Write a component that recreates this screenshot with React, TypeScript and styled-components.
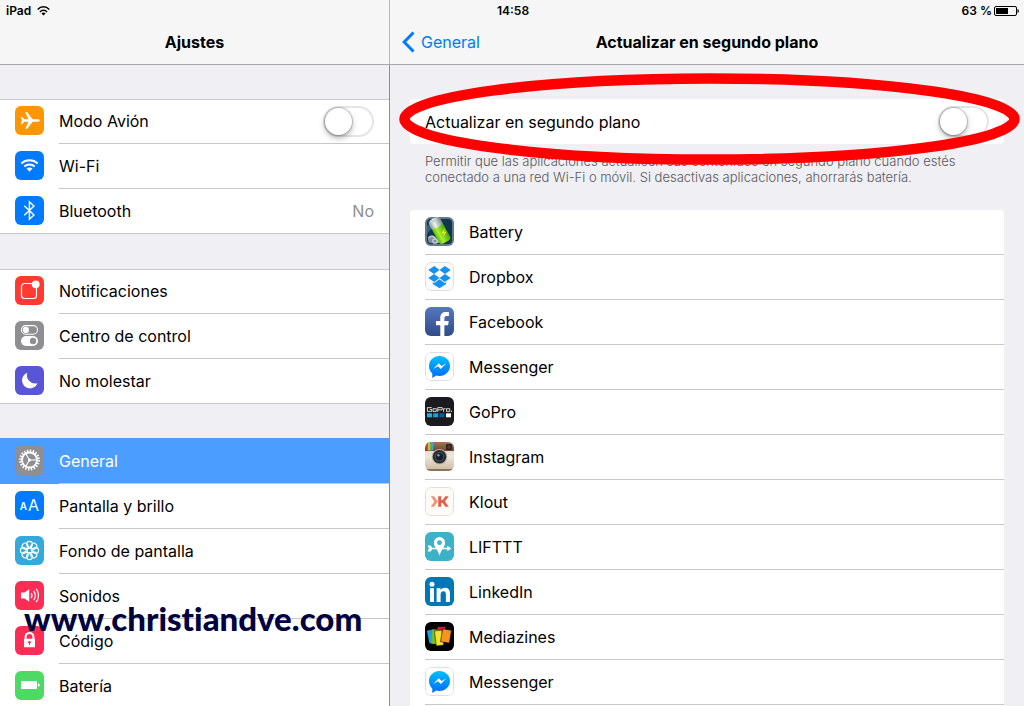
import React from "react";
import styled, { createGlobalStyle, css } from "styled-components";

const GlobalStyle = createGlobalStyle`
  *, *::before, *::after { box-sizing: border-box; }
  html, body, #root { height: 100%; }
  body {
    margin: 0;
    overflow: hidden;
    background: #efeff4;
    color: #000;
    font-family: Inter, "Liberation Sans", sans-serif;
    font-size: 16px;
  }
`;

const Screen = styled.div`
  position: relative;
  display: flex;
  height: 100vh;
  overflow: hidden;
`;

const StatusBar = styled.div`
  position: absolute;
  inset: 0 0 auto 0;
  z-index: 2;
  display: grid;
  grid-template-columns: 1fr auto 1fr;
  align-items: center;
  height: 20px;
  padding: 2px 4px 0 6px;
  font-size: 12px;
  font-weight: 600;
  line-height: 16px;
`;

const StatusItem = styled.div<{ $end?: boolean }>`
  display: flex;
  align-items: center;
  gap: ${(p) => (p.$end ? 2 : 6)}px;
  justify-content: ${(p) => (p.$end ? "flex-end" : "flex-start")};
`;

const Pane = styled.div`
  display: flex;
  flex-direction: column;
  min-width: 0;
  flex: 1;
`;

const Sidebar = styled(Pane)`
  flex: 0 0 390px;
`;

const Header = styled.header<{ $divided?: boolean }>`
  display: grid;
  grid-template-columns: 1fr auto 1fr;
  align-items: center;
  flex: none;
  height: 65px;
  padding: 20px 12px 0;
  background: #f6f6f6;
  border-bottom: 1px solid #a7a7ab;
  ${(p) => p.$divided && css`border-right: 1px solid #b8b8bb;`}
`;

const Title = styled.h1`
  grid-column: 2;
  margin: 0;
  font-size: 16px;
  font-weight: 700;
  line-height: 20px;
`;

const BackButton = styled.button`
  display: flex;
  align-items: center;
  gap: 6px;
  justify-self: start;
  padding: 0;
  border: 0;
  background: none;
  color: #007aff;
  font: inherit;
  line-height: 20px;
  cursor: pointer;
`;

const SideBody = styled.nav`
  display: flex;
  flex-direction: column;
  flex: 1;
  gap: 35px;
  min-height: 0;
  padding-top: 34px;
  overflow: hidden;
  border-right: 1px solid #8e8e93;
`;

const Group = styled.ul`
  flex: none;
  margin: 0;
  padding: 0;
  list-style: none;
  background: #fff;
  box-shadow: inset 0 1px #c8c7cc;
`;

const rowLayout = css`
  display: flex;
  align-items: stretch;
  height: 45px;
  padding-left: 15px;
  gap: 15px;
  color: inherit;
  text-decoration: none;
`;

const Item = styled.li<{ $selected?: boolean; $last?: boolean }>`
  ${(p) => p.$selected && css`background: #4b9eff; color: #fff; box-shadow: 0 -1px #4b9eff;`}
  ${(p) => p.$last && css`box-shadow: inset 0 -1px #c8c7cc;`}
`;

const RowLink = styled.a`${rowLayout}`;
const RowLabel = styled.label`${rowLayout}`;

const AppRow = styled.li`
  ${rowLayout}
  margin-left: 15px;
  padding-left: 0;
  border-bottom: 1px solid #c8c7cc;
`;

const RowBody = styled.span<{ $line?: boolean }>`
  display: flex;
  flex: 1;
  align-items: center;
  justify-content: space-between;
  padding-right: 15px;
  line-height: 20px;
  ${(p) => p.$line !== undefined && css`border-bottom: 1px solid ${p.$line ? "#c8c7cc" : "transparent"};`}
`;

const Value = styled.span`
  color: #8e8e93;
`;

const IconBox = styled.svg`
  display: block;
  flex: none;
  width: 29px;
  height: 29px;
  margin-top: 7px;
  border-radius: 6px;
`;

const Toggle = styled.input`
  appearance: none;
  flex: none;
  width: 51px;
  height: 31px;
  margin: 0;
  border: 2px solid #e5e5e5;
  border-radius: 16px;
  background: #fff;
  &::before {
    content: "";
    display: block;
    width: 27px;
    height: 27px;
    border-radius: 50%;
    background: #fff;
    box-shadow: 0 0 1px 1px rgba(0, 0, 0, 0.2), 0 3px 6px rgba(0, 0, 0, 0.3);
  }
  &:checked { background: #4cd964; border-color: #4cd964; }
  &:checked::before { margin-left: 20px; }
`;

const Detail = styled.main`
  display: flex;
  flex-direction: column;
  flex: 1;
  min-height: 0;
  padding: 34px 20px 0;
  overflow: hidden;
`;

const SwitchCard = styled.div`
  position: relative;
  flex: none;
  background: #fff;
  border-radius: 4px;
`;

const Ring = styled.svg`
  position: absolute;
  left: -11px;
  top: -26px;
  z-index: 1;
  width: calc(100% + 27px);
  height: 92px;
  pointer-events: none;
`;

const Note = styled.p`
  flex: none;
  margin: 9px 0 25px;
  padding: 0 15px;
  color: #58585d;
  font-size: 13px;
  font-weight: 300;
  line-height: 16px;
`;

const AppList = styled.ul`
  flex: 1 0 auto;
  margin: 0;
  padding: 0;
  list-style: none;
  background: #fff;
  border-radius: 4px 4px 0 0;
`;

const Watermark = styled.div`
  position: absolute;
  left: 24px;
  bottom: 68px;
  z-index: 3;
  color: #00003f;
  font-family: Lato, "Open Sans", sans-serif;
  font-size: 33px;
  font-weight: 900;
  font-variant-ligatures: none;
  line-height: 40px;
  pointer-events: none;
`;

function Tile({ bg, children }: { bg: string; children?: React.ReactNode }) {
  return (
    <IconBox viewBox="0 0 29 29" aria-hidden="true">
      <rect width="29" height="29" fill={bg} />
      {children}
    </IconBox>
  );
}

const Frame = () => <rect x=".5" y=".5" width="28" height="28" rx="5.5" fill="none" stroke="#dfdfdf" />;

const PlaneIcon = () => (
  <Tile bg="#ff9500">
    <path fill="#fff" d="M24.8 14.5c0-.9-1-1.3-2.4-1.3h-4.8L12.2 6.2h-1.9l3 7H9.2L7.3 10.8H6l.9 3.7-.9 3.7h1.3l1.9-2.4h4.1l-3 7h1.9l5.4-7h4.8c1.400 0 2.400-.4 2.400-1.300z" />
  </Tile>
);

const WifiIcon = () => (
  <Tile bg="#007aff">
    <g fill="none" stroke="#fff" strokeWidth="2">
      <path d="M6.300 12.400C10.900 8.200 18.100 8.200 22.700 12.400" />
      <path d="M9.300 15.500C12.300 12.900 16.700 12.900 19.700 15.500" />
    </g>
    <path fill="#fff" d="M11.500 17.600c1.800-1.500 4.200-1.500 6 0l-3 3.200z" />
  </Tile>
);

const BluetoothIcon = () => (
  <Tile bg="#007aff">
    <path fill="none" stroke="#fff" strokeWidth="1.400" d="M9.300 9.800l9.700 9.200-4.600 4.200V5.800L19 10l-9.700 9.200" />
  </Tile>
);

const NotificationIcon = () => (
  <Tile bg="#ff3b30">
    <path fill="none" stroke="#fff" strokeWidth="1.200" d="M17 7.500H9.500a3 3 0 0 0-3 3V19.500a3 3 0 0 0 3 3H18.500a3 3 0 0 0 3-3V12" />
    <circle cx="20.700" cy="8.300" r="3.900" fill="#fff" />
  </Tile>
);

const ControlIcon = () => (
  <Tile bg="#8e8e93">
    <rect x="6.500" y="4.600" width="16" height="8.600" rx="4.300" fill="none" stroke="#fff" strokeWidth="1.100" />
    <circle cx="10.900" cy="8.900" r="3.100" fill="#fff" />
    <rect x="6" y="15" width="17" height="10" rx="5" fill="#fff" />
    <circle cx="18" cy="20" r="3.200" fill="#8e8e93" />
  </Tile>
);

const MoonIcon = () => (
  <Tile bg="#5856d6">
    <path fill="#fff" d="M12.300 6.800a8 8 0 1 0 10.200 10.400A8.300 8.300 0 0 1 12.300 6.800z" />
  </Tile>
);

const GearIcon = () => (
  <Tile bg="#8e8e93">
    <g fill="none" stroke="#fff">
      <circle cx="14.500" cy="14" r="9.300" strokeWidth="2.400" strokeDasharray="1.500 1.422" />
      <circle cx="14.500" cy="14" r="7.500" strokeWidth="1.900" />
      <path strokeWidth="1.100" d="M15 14h7M14.500 14l-3.800-6.400M14.500 14l-3.800 6.400" />
    </g>
    <circle cx="14.500" cy="14" r="1.500" fill="#fff" />
  </Tile>
);

const TextSizeIcon = () => (
  <Tile bg="#007aff">
    <g fill="#fff" fontFamily="Inter, sans-serif">
      <text x="4.800" y="18.700" fontSize="10" fontWeight="600">A</text>
      <text x="13" y="19.700" fontSize="16">A</text>
    </g>
  </Tile>
);

const FlowerIcon = () => (
  <Tile bg="#34aadc">
    <g fill="none" stroke="#fff" strokeWidth="1.100">
      <circle cx="14.500" cy="14.500" r="2.400" />
      {[0, 45, 90, 135, 180, 225, 270, 315].map((a) => (
        <circle key={a} cx="14.500" cy="8.300" r="2.900" transform={`rotate(${a} 14.500 14.500)`} />
      ))}
    </g>
  </Tile>
);

const SoundIcon = () => (
  <Tile bg="#ff2d55">
    <path fill="#fff" d="M6 11.500h3.500l4.700-3.300v12.600l-4.700-3.300H6z" />
    <g fill="none" stroke="#fff" strokeWidth="1.200">
      <path d="M16.200 12c1 1.500 1 3.500 0 5" />
      <path d="M18.700 9.900c2 2.800 2 6.400 0 9.200" />
      <path d="M21.200 7.900c2.900 4 2.900 9.200 0 13.200" />
    </g>
  </Tile>
);

const LockIcon = () => (
  <Tile bg="#ff2d55">
    <path fill="none" stroke="#fff" strokeWidth="2" d="M10.600 14v-3.200a3.900 3.900 0 0 1 7.800 0V14" />
    <rect x="9" y="12.800" width="11" height="8.500" rx=".6" fill="#fff" />
    <circle cx="14.500" cy="16.200" r="1.300" fill="#ff2d55" />
    <path stroke="#ff2d55" d="M14.500 16v3" />
  </Tile>
);

const BatteryIcon = () => (
  <Tile bg="#4cd964">
    <rect x="6" y="10" width="16" height="8" rx=".8" fill="#fff" />
    <path fill="#fff" d="M23 12.200c2.400.5 2.400 3.100 0 3.600z" />
  </Tile>
);

const BatteryAppIcon = () => (
  <IconBox viewBox="0 0 29 29" aria-hidden="true">
    <defs>
      <linearGradient id="cell" x1="0" y1="0" x2="1" y2="0">
        <stop offset="0" stopColor="#5cb810" />
        <stop offset=".35" stopColor="#a8f02c" />
        <stop offset="1" stopColor="#43a808" />
      </linearGradient>
      <linearGradient id="steel" x1="0" y1="0" x2="1" y2="0">
        <stop offset="0" stopColor="#8b9a94" />
        <stop offset=".4" stopColor="#eef3ee" />
        <stop offset="1" stopColor="#7d8d86" />
      </linearGradient>
    </defs>
    <rect width="29" height="29" fill="#667888" />
    <rect x="2" y="2" width="25" height="25" rx="4" fill="#123650" />
    <path fill="#2e6385" d="M2 9l8-7h5L2 17z" />
    <path fill="#7f8f9c" d="M3 20q4-3 8 1l4 5H5q-2-1-2-3z" />
    <g fill="none" stroke="#c6cfd3" strokeWidth="1.300">
      <path d="M4 21c2-3 5-2 7 1s3 4 5 3" />
      <circle cx="10" cy="24" r="2.200" />
    </g>
    <g transform="rotate(-29 14 14)">
      <rect x="8.500" y="2" width="12.500" height="25" rx="3" fill="url(#cell)" />
      <path fill="url(#steel)" d="M8.500 9V3.500Q8.500 0 14.700 0T21 3.500V9q-6.200 2.500-12.500 0z" />
      <ellipse cx="14.500" cy="2.300" rx="3.300" ry="1.300" fill="#c9d2cc" />
    </g>
    <path fill="#ffe12b" d="M19.500 11l-3 5.500 2.300-.4-.6 4 3.400-5.600-2.400.3z" />
  </IconBox>
);

const DropboxIcon = () => (
  <Tile bg="#fafafb">
    <path
      fill="#1491f0"
      d="M9.300 4l5.200 3.900-5.500 4-5.700-3.800zM19.700 4l-5.200 3.900 5.500 4 5.700-3.800zM3.300 15.900L9 12.100l5.500 3.900-5.200 3.900zM25.700 15.900L20 12.100 14.500 16l5.200 3.900zM14.500 17.200l5.200 3.900 1.500-.9v1.700l-6.700 4.300-6.700-4.300v-1.700l1.500.9z"
    />
    <Frame />
  </Tile>
);

const FacebookIcon = () => (
  <IconBox viewBox="0 0 29 29" aria-hidden="true">
    <defs>
      <linearGradient id="fb" x1="0" y1="0" x2="0" y2="1">
        <stop offset="0" stopColor="#5578bf" />
        <stop offset="1" stopColor="#304b87" />
      </linearGradient>
    </defs>
    <rect width="29" height="29" fill="url(#fb)" />
    <path fill="#fff" d="M15.300 29V18.300h-4.300v-4.400h4.300v-3.200c0-3.900 2.200-5.800 5.700-5.800 1.300 0 2.100.1 2.900.2V9h-2.200c-1.700 0-2.300.8-2.300 2.100v2.800h4.300l-.6 4.400h-3.700V29z" />
  </IconBox>
);

const MessengerIcon = ({ id }: { id: string }) => (
  <Tile bg="#fff">
    <defs>
      <linearGradient id={id} x1="0" y1="0" x2="0" y2="1">
        <stop offset="0" stopColor="#00c0ff" />
        <stop offset="1" stopColor="#0068ff" />
      </linearGradient>
    </defs>
    <path fill={`url(#${id})`} d="M14.500 4C8.600 4 4 8.400 4 14c0 3.100 1.200 5.600 3.300 7.500V26l3.900-2.400c1 .3 2.200.4 3.300.4C20.400 24 25 19.600 25 14S20.400 4 14.500 4z" />
    <path fill="#fff" d="M8.200 17l5.500-5.700 2.900 2.600 4.700-2.600-5.500 5.800-2.800-2.800z" />
    <Frame />
  </Tile>
);

const GoProIcon = () => (
  <Tile bg="#1b1b1f">
    <g fill="none" stroke="#fff" strokeWidth=".8">
      <path d="M6.800 10.600H2.400v3.800h4.300v-2H4.600M8 11.700h3.300v2.700H8zM12.800 14.900v-4.300h4.400v2.200h-4.400M18.600 14.900v-3.200h2M21.500 11.700h3.300v2.700h-3.300z" />
    </g>
    <rect x="26" y="13.800" width="1" height="1" fill="#fff" />
    <rect x="2" y="16.300" width="5" height="4" fill="#1caee5" />
    <rect x="8.200" y="16.300" width="5" height="4" fill="#169fdc" />
    <rect x="14.400" y="16.300" width="5" height="4" fill="#0b5aa6" />
    <rect x="21" y="16.300" width="5" height="4" fill="#fff" />
  </Tile>
);

const InstagramIcon = () => (
  <IconBox viewBox="0 0 29 29" aria-hidden="true">
    <defs>
      <linearGradient id="cream" x1="0" y1="0" x2="0" y2="1">
        <stop offset="0" stopColor="#d8cbb6" />
        <stop offset=".5" stopColor="#efe8da" />
        <stop offset="1" stopColor="#c9b89e" />
      </linearGradient>
      <linearGradient id="leather" x1="0" y1="0" x2="0" y2="1">
        <stop offset="0" stopColor="#a87556" />
        <stop offset="1" stopColor="#6f432d" />
      </linearGradient>
    </defs>
    <rect width="29" height="29" fill="url(#cream)" />
    <rect width="29" height="9" fill="url(#leather)" />
    <rect x="1.500" width="1.700" height="8.500" fill="#e5423b" />
    <rect x="3.200" width="1.700" height="8.500" fill="#f2c53a" />
    <rect x="4.900" width="1.700" height="8.500" fill="#5cba5a" />
    <rect x="6.600" width="1.700" height="8.500" fill="#43a5dc" />
    <rect x="21" y="2" width="6" height="6" rx="1.200" fill="#2a2324" />
    <circle cx="24" cy="5" r="1.700" fill="#4c3e42" />
    <rect y="27" width="29" height="2" fill="#8b7258" />
    <circle cx="14.500" cy="14.800" r="7.800" fill="#b9b1a5" />
    <circle cx="14.500" cy="14.800" r="6.800" fill="#29292d" />
    <circle cx="14.500" cy="14.800" r="4.800" fill="#46535f" />
    <circle cx="14.500" cy="14.800" r="3.700" fill="#15202e" />
    <circle cx="13.400" cy="13.200" r="1.300" fill="#7995ac" />
  </IconBox>
);

const KloutIcon = () => (
  <Tile bg="#fdfbf6">
    <path fill="#f0917a" d="M5.800 9.300h3.200l3.700 5.200L9 19.700H5.800l3.600-5.200z" />
    <path fill="#e4604c" d="M13.200 9.300h3v3.800h1.500l2.600-3.800h3.400l-3.700 5.200 3.700 5.200h-3.400l-2.600-3.800h-1.500v3.800h-3z" />
    <Frame />
  </Tile>
);

const LiftttIcon = () => (
  <Tile bg="#3db1c8">
    <path fill="#fff" fillRule="evenodd" d="M14.500 5a5.600 5.600 0 0 0-5.600 5.700c0 4 4 7 5.600 13 1.600-6 5.600-9 5.600-13A5.600 5.600 0 0 0 14.500 5zm0 3.300a2.400 2.400 0 1 1 0 4.800 2.400 2.400 0 0 1 0-4.800z" />
    <path stroke="#fff" strokeWidth="1.300" d="M4 16.500h19" />
    <path fill="#fff" d="M22.300 13.700l4 2.800-4 2.800zM2.500 13.600h3.200l2 2.900-2 2.900H2.500l1.500-2.900z" />
  </Tile>
);

const LinkedInIcon = () => (
  <Tile bg="#0077b5">
    <circle cx="7" cy="7.300" r="2.500" fill="#fff" />
    <path fill="#fff" d="M5 11.200h4V25H5zM11.600 11.200h3.900v1.900c.7-1.200 2.200-2.300 4.400-2.300 4 0 5.100 2.600 5.100 6.200v8h-4.100v-7.100c0-2-.4-3.600-2.400-3.600-2.100 0-2.900 1.500-2.900 3.600V25h-4z" />
  </Tile>
);

const MediazinesIcon = () => (
  <Tile bg="#000">
    <rect x="12.500" y="4.800" width="8" height="12" fill="#d3173f" />
    <rect x="3" y="8" width="6" height="13" fill="#20a0d8" transform="rotate(-12 6 14)" />
    <rect x="6.800" y="7.500" width="6" height="14.500" fill="#78b92d" transform="rotate(5 10 14)" />
    <rect x="10.500" y="8.500" width="7.500" height="15" fill="#f4e22c" stroke="#111" strokeWidth=".5" transform="rotate(-7 14 17)" />
    <rect x="16.500" y="7.500" width="9" height="13" fill="#f8931d" stroke="#111" strokeWidth=".6" transform="rotate(9 21 14)" />
  </Tile>
);

type Entry = { label: string; icon: React.ReactNode; value?: string; toggle?: boolean; selected?: boolean };

const groups: Entry[][] = [
  [
    { label: "Modo Avión", icon: <PlaneIcon />, toggle: true },
    { label: "Wi-Fi", icon: <WifiIcon /> },
    { label: "Bluetooth", icon: <BluetoothIcon />, value: "No" },
  ],
  [
    { label: "Notificaciones", icon: <NotificationIcon /> },
    { label: "Centro de control", icon: <ControlIcon /> },
    { label: "No molestar", icon: <MoonIcon /> },
  ],
  [
    { label: "General", icon: <GearIcon />, selected: true },
    { label: "Pantalla y brillo", icon: <TextSizeIcon /> },
    { label: "Fondo de pantalla", icon: <FlowerIcon /> },
    { label: "Sonidos", icon: <SoundIcon /> },
    { label: "Código", icon: <LockIcon /> },
    { label: "Batería", icon: <BatteryIcon /> },
  ],
];

const apps: Entry[] = [
  { label: "Battery", icon: <BatteryAppIcon /> },
  { label: "Dropbox", icon: <DropboxIcon /> },
  { label: "Facebook", icon: <FacebookIcon /> },
  { label: "Messenger", icon: <MessengerIcon id="msgA" /> },
  { label: "GoPro", icon: <GoProIcon /> },
  { label: "Instagram", icon: <InstagramIcon /> },
  { label: "Klout", icon: <KloutIcon /> },
  { label: "LIFTTT", icon: <LiftttIcon /> },
  { label: "LinkedIn", icon: <LinkedInIcon /> },
  { label: "Mediazines", icon: <MediazinesIcon /> },
  { label: "Messenger", icon: <MessengerIcon id="msgB" /> },
];

function SideItem({ entry, last }: { entry: Entry; last: boolean }) {
  const body = (
    <>
      {entry.icon}
      <RowBody $line={!last}>
        {entry.label}
        {entry.value && <Value>{entry.value}</Value>}
        {entry.toggle && <Toggle type="checkbox" role="switch" />}
      </RowBody>
    </>
  );
  return (
    <Item $selected={entry.selected} $last={last}>
      {entry.toggle ? <RowLabel>{body}</RowLabel> : <RowLink href="#">{body}</RowLink>}
    </Item>
  );
}

export default function App() {
  return (
    <Screen>
      <GlobalStyle />
      <StatusBar>
        <StatusItem>
          iPad
          <svg width="13" height="10" viewBox="0 0 13 10" aria-hidden="true">
            <g fill="none" stroke="#000" strokeWidth="1.500">
              <path d="M.7 3.500C4-.1 9 -.1 12.300 3.500" />
              <path d="M2.900 5.900C5 3.700 8 3.700 10.100 5.900" />
            </g>
            <path d="M4.500 7.400c1.200-1.100 2.800-1.100 4 0l-2 2.200z" />
          </svg>
        </StatusItem>
        <div>14:58</div>
        <StatusItem $end>
          63 %
          <svg width="26" height="10" viewBox="0 0 26 10" aria-hidden="true">
            <rect x=".5" y=".5" width="22" height="9" rx="1.500" fill="none" stroke="#000" />
            <rect x="2" y="2" width="12" height="6" />
            <path d="M23.500 3c1.800.4 1.800 3.600 0 4z" />
          </svg>
        </StatusItem>
      </StatusBar>

      <Sidebar>
        <Header $divided>
          <Title>Ajustes</Title>
        </Header>
        <SideBody>
          {groups.map((group, i) => (
            <Group key={i}>
              {group.map((entry, j) => (
                <SideItem key={entry.label} entry={entry} last={j === group.length - 1} />
              ))}
            </Group>
          ))}
        </SideBody>
      </Sidebar>

      <Pane>
        <Header>
          <BackButton type="button">
            <svg width="13" height="22" viewBox="0 0 13 22" aria-hidden="true">
              <path d="M11.500 1.500L2.200 11l9.300 9.500" fill="none" stroke="#007aff" strokeWidth="3" />
            </svg>
            General
          </BackButton>
          <Title as="h2">Actualizar en segundo plano</Title>
        </Header>
        <Detail>
          <SwitchCard>
            <RowLabel>
              <RowBody>
                Actualizar en segundo plano
                <Toggle type="checkbox" role="switch" />
              </RowBody>
            </RowLabel>
            <Ring viewBox="0 0 621 92" preserveAspectRatio="none" aria-hidden="true">
              <ellipse cx="310.500" cy="46" rx="305" ry="40.500" fill="none" stroke="#f00" strokeWidth="10.500" />
            </Ring>
          </SwitchCard>
          <Note>
            Permitir que las aplicaciones actualicen sus contenidos en segundo plano cuando estés
            conectado a una red Wi-Fi o móvil. Si desactivas aplicaciones, ahorrarás batería.
          </Note>
          <AppList>
            {apps.map((app, i) => (
              <AppRow key={i}>
                {app.icon}
                <RowBody>{app.label}</RowBody>
              </AppRow>
            ))}
          </AppList>
        </Detail>
      </Pane>

      <Watermark>www.christiandve.com</Watermark>
    </Screen>
  );
}
